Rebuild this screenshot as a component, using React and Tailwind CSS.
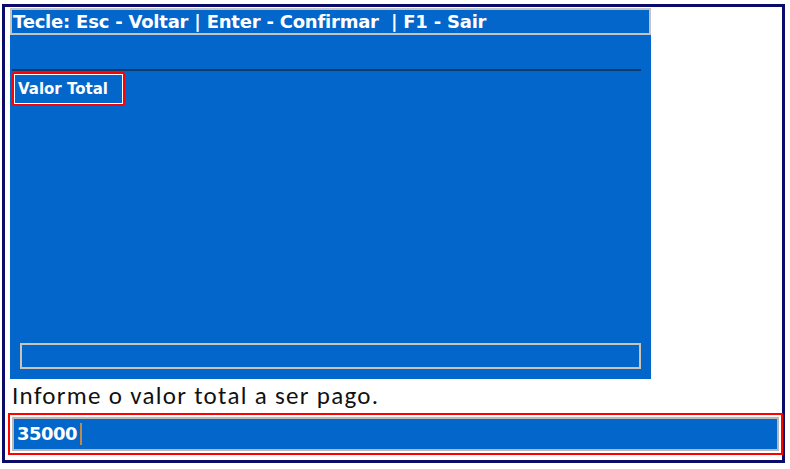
import React from 'react';

export default function App() {
  return (
    <div className="w-[790px] h-[469px] bg-white pt-[4px] pl-[2px]">
      <div className="w-[783px] h-[459px] border-[3px] border-[#0b0b6b] bg-white flex flex-col">
        <div className="ml-[5px] mt-[1px] w-[641px] h-[371px] bg-[#0366cb] flex flex-col">
          <div className="h-[27px] border-2 border-[#c4c4c4] flex items-center pl-[1px]">
            <p className="text-white font-bold text-[18px] tracking-[-0.22px] whitespace-pre leading-none" style={{ fontFamily: 'Tahoma, "DejaVu Sans", sans-serif' }}>
              Tecle: Esc - Voltar | Enter - Confirmar  | F1 - Sair
            </p>
          </div>
          <div className="mt-[34px] ml-[2px] w-[629px] h-[2px] bg-[#0c3a6c]" />
          <div className="mt-[1px] ml-[2px] w-[113px] h-[34px] border-2 border-[#ff0000] rounded-[2px]">
            <div className="h-full border border-white flex items-center pl-[3px]">
              <p className="text-white font-bold text-[15px] leading-none" style={{ fontFamily: 'Tahoma, "DejaVu Sans", sans-serif' }}>
                Valor Total
              </p>
            </div>
          </div>
          <div className="mt-auto mb-[10px] mx-[10px] h-[26px] border-2 border-[#c9c3b8]" />
        </div>
        <p className="ml-[7px] mt-[3px] text-[#111] text-[25px] tracking-[1.3px] leading-[28px]" style={{ fontFamily: 'Calibri, "Open Sans", sans-serif' }}>
          Informe o valor total a ser pago.
        </p>
        <div className="ml-[3px] mt-[3px] w-[775px] h-[42px] border-2 border-[#ff0000] p-[2px]">
          <div className="h-full border-2 border-[#b8b8b8] bg-[#0366cb] flex items-center pl-[3px]">
            <p className="text-white font-bold text-[18px] tracking-[-0.5px] leading-none" style={{ fontFamily: 'Tahoma, "DejaVu Sans", sans-serif' }}>
              35000
            </p>
            <div className="ml-[3px] w-[2px] h-[22px] bg-[#c08a4a]" />
          </div>
        </div>
      </div>
    </div>
  );
}
